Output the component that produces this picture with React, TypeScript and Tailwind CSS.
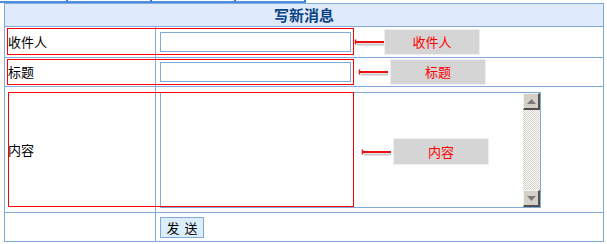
import React from 'react';

function Arrow({ className }: { className: string }) {
  return (
    <svg className={className} width="32" height="10" viewBox="0 0 32 10">
      {/* shadow */}
      <line x1="3" y1="6.5" x2="30" y2="6.5" stroke="#c8c8c8" strokeWidth="2" />
      <line x1="1" y1="4" x2="30" y2="4" stroke="#ee1111" strokeWidth="2" />
      <line x1="1.5" y1="1.5" x2="1.5" y2="6.5" stroke="#ee1111" strokeWidth="1.5" />
    </svg>
  );
}

function Callout({ className, text }: { className: string; text: string }) {
  return (
    <div
      className={`absolute flex items-center justify-center bg-[#d5d5d5] border border-[#eeeeee] text-[13px] text-[#ff0000] ${className}`}
    >
      {text}
    </div>
  );
}

function ScrollButton({ down }: { down?: boolean }) {
  return (
    <div className="w-[17px] h-[17px] bg-[#d4d0c8] border-t border-l border-t-[#f4f4f4] border-l-[#f4f4f4] border-b-2 border-r-2 border-b-[#505050] border-r-[#505050] flex items-center justify-center">
      <svg width="9" height="5" viewBox="0 0 9 5">
        {down ? (
          <polygon points="0,0 9,0 4.5,5" fill="#7a7a7a" />
        ) : (
          <polygon points="0,5 9,5 4.5,0" fill="#7a7a7a" />
        )}
      </svg>
    </div>
  );
}

export default function App() {
  return (
    <div className="relative w-[607px] h-[244px] bg-white font-['Noto_Sans_CJK_SC','Noto_Sans',sans-serif] text-black overflow-hidden">
      {/* strip from the element above */}
      <div className="relative h-[3px] w-[306px]">
        <div className="absolute left-0 right-0 top-[1px] h-[2px] bg-[#4d8fdc]" />
        <div className="absolute left-[66px] top-0 w-[2px] h-[2px] bg-[#3b7fd0]" />
        <div className="absolute left-[150px] top-0 w-[2px] h-[2px] bg-[#3b7fd0]" />
        <div className="absolute left-[234px] top-0 w-[2px] h-[2px] bg-[#3b7fd0]" />
        <div className="absolute left-[304px] top-0 w-[2px] h-[2px] bg-[#3b7fd0]" />
      </div>

      {/* table */}
      <div className="ml-[4px] w-[600px] border border-[#80a9dc] text-[13px]">
        <div className="h-[23px] border-b border-[#80a9dc] bg-[#dfeafc] text-center text-[15px] font-bold leading-[22px] text-[#0c4585]">
          写新消息
        </div>

        <div className="flex h-[31px] border-b border-[#80a9dc]">
          <div className="w-[151px] border-r border-[#80a9dc] pl-[3px] flex items-center">收件人</div>
          <div className="flex-1 pl-[4px] flex items-center">
            <input className="w-[191px] h-[20px] border border-[#80a9dc] outline-none px-1" />
          </div>
        </div>

        <div className="flex h-[29px] border-b border-[#80a9dc]">
          <div className="w-[151px] border-r border-[#80a9dc] pl-[3px] flex items-center">标题</div>
          <div className="flex-1 pl-[4px] flex items-center">
            <input className="w-[191px] h-[20px] border border-[#80a9dc] outline-none px-1" />
          </div>
        </div>

        <div className="flex h-[126px] border-b border-[#80a9dc]">
          <div className="w-[151px] border-r border-[#80a9dc] pl-[3px] flex items-center">内容</div>
          <div className="flex-1 pl-[4px] pt-[5px]">
            <div className="w-[381px] h-[116px] border border-[#80a9dc] flex">
              <textarea className="flex-1 resize-none outline-none overflow-hidden p-1" />
              <div className="w-[17px] flex flex-col">
                <ScrollButton />
                <div className="flex-1 bg-[image:repeating-conic-gradient(#d4d0c8_0_25%,#ffffff_0_50%)] bg-[length:2px_2px]" />
                <ScrollButton down />
              </div>
            </div>
          </div>
        </div>

        <div className="flex h-[28px]">
          <div className="w-[151px] border-r border-[#80a9dc]" />
          <div className="flex-1 pl-[4px] flex items-center">
            <button className="w-[44px] h-[21px] bg-[#dcedfc] border border-[#80a9dc] text-[13px] leading-none flex items-center justify-center gap-[5px]">
              <span>发</span>
              <span>送</span>
            </button>
          </div>
        </div>
      </div>

      {/* annotations */}
      <div className="absolute left-[7px] top-[28px] w-[347px] h-[27px] border border-[#ff0000]" />
      <div className="absolute left-[7px] top-[59px] w-[347px] h-[26px] border border-[#ff0000]" />
      <div className="absolute left-[8px] top-[92px] w-[346px] h-[115px] border border-[#ff0000]" />

      <Arrow className="absolute left-[354px] top-[38px]" />
      <Arrow className="absolute left-[358px] top-[68px]" />
      <Arrow className="absolute left-[361px] top-[148px]" />

      <Callout className="left-[384px] top-[29px] w-[96px] h-[26px]" text="收件人" />
      <Callout className="left-[390px] top-[59px] w-[96px] h-[26px]" text="标题" />
      <Callout className="left-[393px] top-[138px] w-[96px] h-[27px]" text="内容" />
    </div>
  );
}
